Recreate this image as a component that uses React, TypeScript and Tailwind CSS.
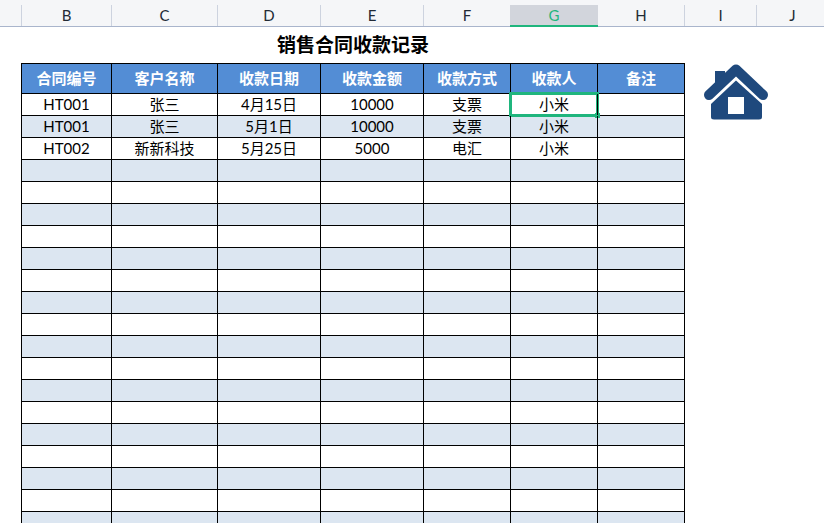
const font = { fontFamily: '"Lato", "Noto Sans CJK SC", sans-serif' }

const columnHeaders = [
  { label: 'B', width: 'w-[90px]' },
  { label: 'C', width: 'w-[106px]' },
  { label: 'D', width: 'w-[103px]' },
  { label: 'E', width: 'w-[103px]' },
  { label: 'F', width: 'w-[87px]' },
  { label: 'G', width: 'w-[88px]', active: true },
  { label: 'H', width: 'w-[86px]', plain: true },
  { label: 'I', width: 'w-[72px]' },
  { label: 'J', width: 'w-[72px]' },
]

const cellWidths = ['w-[90px]', 'w-[106px]', 'w-[103px]', 'w-[103px]', 'w-[87px]', 'w-[87px]', 'w-[88px]']

const headers = ['合同编号', '客户名称', '收款日期', '收款金额', '收款方式', '收款人', '备注']

const records = [
  ['HT001', '张三', '4月15日', '10000', '支票', '小米', ''],
  ['HT001', '张三', '5月1日', '10000', '支票', '小米', ''],
  ['HT002', '新新科技', '5月25日', '5000', '电汇', '小米', ''],
]

const rows = Array.from({ length: 20 }, (_, i) => records[i] ?? ['', '', '', '', '', '', ''])

function HomeIcon() {
  return (
    <svg width="64" height="56" viewBox="0 0 64 56" fill="none">
      <rect x="11" y="7" width="10" height="16" fill="#1F497D" />
      <polyline
        points="5,31 32,5.5 59,31"
        stroke="#1F497D"
        strokeWidth="10"
        strokeLinecap="round"
        strokeLinejoin="round"
      />
      <path
        d="M7 40 L32 16.5 L58 40 V53 Q58 55.5 55 55.5 H10 Q7 55.5 7 53 Z"
        fill="#1F497D"
      />
      <rect x="24" y="33" width="16" height="17" fill="#ffffff" />
    </svg>
  )
}

export default function App() {
  return (
    <div className="w-[824px] h-[523px] overflow-hidden bg-white text-black" style={font}>
      <div className="flex h-[27px] pt-[5px] pl-[21px] bg-[#f5f6f8] border-b border-[#a9b5cc]">
        {columnHeaders.map((col) => (
          <div
            key={col.label}
            className={`${col.width} shrink-0 flex items-center justify-center text-[15px] ${
              col.active
                ? 'bg-[#d2d5dc] text-[#1fb57d] border-b-2 border-[#1fb57d] -mb-px'
                : col.plain
                  ? 'text-[#222a35]'
                  : 'text-[#222a35] border-l border-[#cdd3df]'
            }`}
          >
            {col.label}
          </div>
        ))}
      </div>

      <div className="flex pl-[21px]">
        <div className="w-[664px] shrink-0">
          <div className="h-[36px] flex items-center justify-center text-[19px] font-bold">
            销售合同收款记录
          </div>

          <div className="flex h-[30px] bg-[#538dd5] border-t border-black">
            {headers.map((text, i) => (
              <div
                key={text}
                className={`${cellWidths[i]} shrink-0 flex items-center justify-center border-l border-black text-[15px] font-bold text-white ${
                  i === 6 ? 'border-r' : ''
                }`}
              >
                {text}
              </div>
            ))}
          </div>

          {rows.map((row, r) => (
            <div
              key={r}
              className={`flex h-[22px] border-t border-black ${r % 2 === 1 ? 'bg-[#dce6f1]' : 'bg-white'}`}
            >
              {row.map((text, c) => (
                <div
                  key={c}
                  className={`${cellWidths[c]} relative shrink-0 flex items-center justify-center border-l border-black text-[15px] ${
                    c === 6 ? 'border-r' : ''
                  }`}
                >
                  {text}
                  {r === 0 && c === 5 && (
                    <>
                      <div className="absolute -top-[2px] -left-[2px] w-[90px] h-[25px] border-[3px] border-[#1fb57d]" />
                      <div className="absolute -bottom-[3px] -right-[3px] w-[5px] h-[5px] bg-[#1fb57d]" />
                    </>
                  )}
                </div>
              ))}
            </div>
          ))}
        </div>

        <div className="ml-[19px] mt-[37px]">
          <HomeIcon />
        </div>
      </div>
    </div>
  )
}
